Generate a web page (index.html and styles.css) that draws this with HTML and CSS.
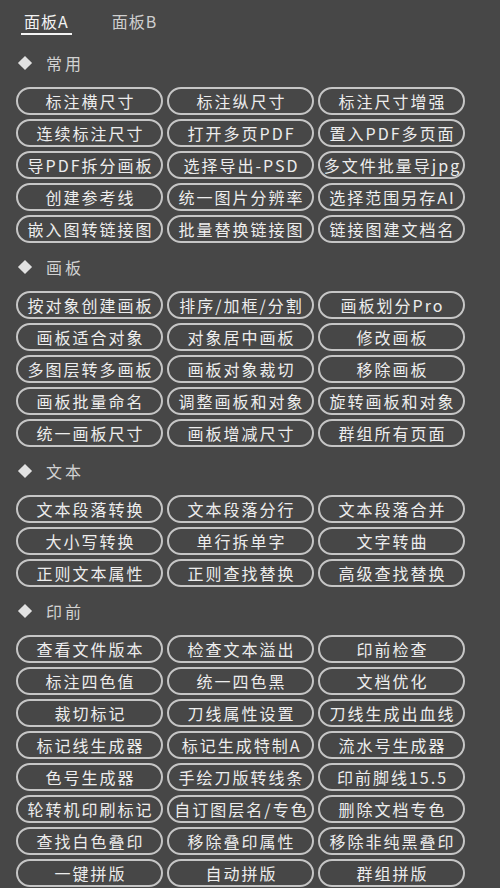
FILE: index.html
```html
<!DOCTYPE html>
<html lang="zh-CN">
<head>
<meta charset="utf-8">
<title>面板</title>
<link rel="stylesheet" href="styles.css">
</head>
<body>
<div class="panel">
  <div class="tabs">
    <div class="tab active">面板A</div>
    <div class="tab">面板B</div>
  </div>

  <div class="section-head"><span class="diamond"></span><span class="section-title">常用</span></div>
  <div class="grid">
    <div class="btn">标注横尺寸</div><div class="btn">标注纵尺寸</div><div class="btn">标注尺寸增强</div>
    <div class="btn">连续标注尺寸</div><div class="btn">打开多页PDF</div><div class="btn">置入PDF多页面</div>
    <div class="btn">导PDF拆分画板</div><div class="btn">选择导出-PSD</div><div class="btn">多文件批量导jpg</div>
    <div class="btn">创建参考线</div><div class="btn">统一图片分辨率</div><div class="btn">选择范围另存AI</div>
    <div class="btn">嵌入图转链接图</div><div class="btn">批量替换链接图</div><div class="btn">链接图建文档名</div>
  </div>

  <div class="section-head"><span class="diamond"></span><span class="section-title">画板</span></div>
  <div class="grid">
    <div class="btn">按对象创建画板</div><div class="btn">排序/加框/分割</div><div class="btn">画板划分Pro</div>
    <div class="btn">画板适合对象</div><div class="btn">对象居中画板</div><div class="btn">修改画板</div>
    <div class="btn">多图层转多画板</div><div class="btn">画板对象裁切</div><div class="btn">移除画板</div>
    <div class="btn">画板批量命名</div><div class="btn">调整画板和对象</div><div class="btn">旋转画板和对象</div>
    <div class="btn">统一画板尺寸</div><div class="btn">画板增减尺寸</div><div class="btn">群组所有页面</div>
  </div>

  <div class="section-head"><span class="diamond"></span><span class="section-title">文本</span></div>
  <div class="grid">
    <div class="btn">文本段落转换</div><div class="btn">文本段落分行</div><div class="btn">文本段落合并</div>
    <div class="btn">大小写转换</div><div class="btn">单行拆单字</div><div class="btn">文字转曲</div>
    <div class="btn">正则文本属性</div><div class="btn">正则查找替换</div><div class="btn">高级查找替换</div>
  </div>

  <div class="section-head"><span class="diamond"></span><span class="section-title">印前</span></div>
  <div class="grid">
    <div class="btn">查看文件版本</div><div class="btn">检查文本溢出</div><div class="btn">印前检查</div>
    <div class="btn">标注四色值</div><div class="btn">统一四色黑</div><div class="btn">文档优化</div>
    <div class="btn">裁切标记</div><div class="btn">刀线属性设置</div><div class="btn">刀线生成出血线</div>
    <div class="btn">标记线生成器</div><div class="btn">标记生成特制A</div><div class="btn">流水号生成器</div>
    <div class="btn">色号生成器</div><div class="btn">手绘刀版转线条</div><div class="btn">印前脚线15.5</div>
    <div class="btn">轮转机印刷标记</div><div class="btn">自订图层名/专色</div><div class="btn">删除文档专色</div>
    <div class="btn">查找白色叠印</div><div class="btn">移除叠印属性</div><div class="btn">移除非纯黑叠印</div>
    <div class="btn">一键拼版</div><div class="btn">自动拼版</div><div class="btn">群组拼版</div>
  </div>
</div>
</body>
</html>
```

FILE: styles.css
```css
html, body {
  margin: 0;
  padding: 0;
  height: 888px;
  overflow: hidden;
  background: #474747;
}

.panel {
  font-family: "Noto Sans CJK SC", "Noto Sans", sans-serif;
  color: #ececec;
}

.tabs {
  display: flex;
  gap: 37px;
  padding: 10px 0 0 21px;
  margin-bottom: 4px;
}

.tab {
  font-size: 16px;
  line-height: 22px;
  padding: 0 3px 1px 3px;
  border-bottom: 2px solid transparent;
  color: #cfcfcf;
  letter-spacing: 1px;
}

.tab.active {
  color: #f2f2f2;
  border-bottom-color: #f4f4f4;
}

.section-head {
  display: flex;
  align-items: center;
  height: 48px;
  padding-left: 20px;
}

.diamond {
  width: 10px;
  height: 10px;
  background: #e2e2e2;
  transform: rotate(45deg);
  flex: none;
}

.section-title {
  margin-left: 16px;
  font-size: 16px;
  letter-spacing: 3px;
  color: #d2d2d2;
}

.grid {
  display: grid;
  grid-template-columns: repeat(3, 147px);
  column-gap: 4px;
  row-gap: 4px;
  margin-left: 16px;
}

.btn {
  box-sizing: border-box;
  height: 28px;
  border: 2px solid #c6c6c6;
  border-radius: 14px;
  font-size: 16px;
  line-height: 24px;
  letter-spacing: 2px;
  padding-left: 2px;
  text-align: center;
  white-space: nowrap;
  overflow: hidden;
  color: #ededed;
}
```
